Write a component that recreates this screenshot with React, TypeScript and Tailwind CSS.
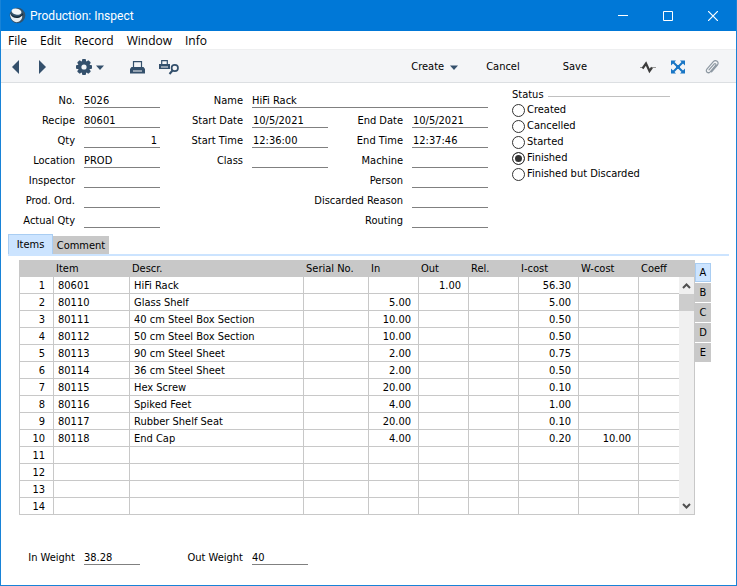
import React, { useState } from 'react'

type TypedRow = {
  item?: string
  descr?: string
  in?: string
  out?: string
  icost?: string
  wcost?: string
}

const rows: TypedRow[] = [
  { item: '80601', descr: 'HiFi Rack', out: '1.00', icost: '56.30' },
  { item: '80110', descr: 'Glass Shelf', in: '5.00', icost: '5.00' },
  { item: '80111', descr: '40 cm Steel Box Section', in: '10.00', icost: '0.50' },
  { item: '80112', descr: '50 cm Steel Box Section', in: '10.00', icost: '0.50' },
  { item: '80113', descr: '90 cm Steel Sheet', in: '2.00', icost: '0.75' },
  { item: '80114', descr: '36 cm Steel Sheet', in: '2.00', icost: '0.50' },
  { item: '80115', descr: 'Hex Screw', in: '20.00', icost: '0.10' },
  { item: '80116', descr: 'Spiked Feet', in: '4.00', icost: '1.00' },
  { item: '80117', descr: 'Rubber Shelf Seat', in: '20.00', icost: '0.10' },
  { item: '80118', descr: 'End Cap', in: '4.00', icost: '0.20', wcost: '10.00' },
  {},
  {},
  {},
  {},
]

const menus = ['File', 'Edit', 'Record', 'Window', 'Info']
const statuses = ['Created', 'Cancelled', 'Started', 'Finished', 'Finished but Discarded']
const flips = ['A', 'B', 'C', 'D', 'E']

const Logo = () => (
  <svg width="17" height="17" viewBox="0 0 17 17" aria-hidden="true">
    <circle cx="8.5" cy="8.5" r="7.8" fill="#33536c" />
    <ellipse cx="7.500" cy="4.600" rx="5" ry="3" fill="#f3f6f8" transform="rotate(12 7.500 4.600)" />
    <path d="M1.200 6C3 8.800 6 10 9.500 9.300c2-.5 3.500-1.600 4.300-3C15 8.500 13 11.500 9.500 12 5.500 12.500 1.200 10.500 1.200 6Z" fill="#152a3a" />
    <path d="M1 6.500C2.500 10 5.500 11.500 8.800 11c2-.4 3.500-1.500 4.500-2.800.2 3.300-1.800 6.300-4.800 6.900C4.500 15.500 1 12 1 6.500Z" fill="#e6ecf0" />
  </svg>
)

const Printer = () => (
  <svg width="15" height="13" viewBox="0 0 15 13" aria-hidden="true">
    <path d="M3.500 6V.7h8V6" fill="#f4f5f7" stroke="#34506c" strokeWidth="1.200" />
    <path d="M1.500 6h12L15 8v4.500H0V8Z" fill="#34506c" />
    <path d="M3 9.500h9v1H3Z" fill="#f4f5f7" />
  </svg>
)

const PrinterPreview = () => (
  <svg width="21" height="15" viewBox="0 0 21 15" aria-hidden="true">
    <path d="M2.700 4V.6h5.600V4" fill="#f4f5f7" stroke="#34506c" strokeWidth="1.200" />
    <path d="M0 4h11v5H0Z" fill="#34506c" />
    <path d="M2 6.500h7v1H2Z" fill="#f4f5f7" />
    <circle cx="15.800" cy="8" r="3.200" fill="#f4f5f7" stroke="#34506c" strokeWidth="1.700" />
    <path d="M13.500 10.500 10.500 14" stroke="#34506c" strokeWidth="2" />
  </svg>
)

const Gear = () => (
  <svg width="16" height="16" viewBox="0 0 16 16" aria-hidden="true">
    <g fill="#34506c">
      <rect x="6" y="0" width="4" height="16" rx="1" />
      <rect x="6" y="0" width="4" height="16" rx="1" transform="rotate(45 8 8)" />
      <rect x="6" y="0" width="4" height="16" rx="1" transform="rotate(90 8 8)" />
      <rect x="6" y="0" width="4" height="16" rx="1" transform="rotate(135 8 8)" />
      <circle cx="8" cy="8" r="6.200" />
    </g>
    <circle cx="8" cy="8" r="2.600" fill="#f4f5f7" />
  </svg>
)

const Caret = () => (
  <svg width="8" height="5" viewBox="0 0 8 5" aria-hidden="true">
    <path d="M0 .5h8L4 5Z" fill="#34506c" />
  </svg>
)

const Activity = () => (
  <svg width="16" height="13" viewBox="0 0 16 13" aria-hidden="true">
    <path d="M0 6.500h3.500M12 6.500h4" stroke="#999" strokeWidth="1" />
    <path d="M2.500 7.500 6 2.500 9.500 10l2.500-3.500" fill="none" stroke="#3c3c3c" strokeWidth="2.200" />
  </svg>
)

const Expand = () => (
  <svg width="14" height="14" viewBox="0 0 14 14" aria-hidden="true">
    <path d="M2 2l10 10M12 2 2 12" stroke="#1976c5" strokeWidth="2" />
    <path d="M0 .5h5L0 5.500ZM14 .5v5L9 .5ZM0 13.500v-5l5 5ZM14 13.500H9l5-5Z" fill="#1976c5" />
    <rect x="5" y="5" width="4" height="4" fill="#1976c5" />
  </svg>
)

const Clip = () => (
  <svg width="14" height="16" viewBox="0 0 14 16" aria-hidden="true">
    <path
      d="M4 10.800 9 5.200c1.200-1.300 2.700 0 1.600 1.300l-5.400 6.300c-2 2.200-5.200-.2-3.300-2.600L8.100 2.800c2.700-2.900 6.600.4 4.300 3.200L6.600 12.900"
      fill="none" stroke="#8e99a3" strokeWidth="1.200" strokeLinecap="round"
    />
  </svg>
)

type FieldProps = { label: string, value?: string, inputClass?: string, labelClass?: string }

const Field = ({ label, value = '', inputClass = '', labelClass = '' }: FieldProps) => {
  const id = label.toLowerCase().replace(/[^a-z]+/g, '-')
  return (
    <>
      <label htmlFor={id} className={`pt-[6px] pr-[9px] text-right leading-[14px] whitespace-nowrap ${labelClass}`}>{label}</label>
      <input id={id} defaultValue={value} className={`mt-1 h-4 min-w-0 border-b border-[#808080] pt-px leading-3 outline-none ${inputClass}`} />
    </>
  )
}

const num = 'border-r border-b border-[#c8c8c8] pt-[2px] pr-[7px] text-right'
const txt = 'border-r border-b border-[#c8c8c8] pt-[2px] pl-1'

const ItemsTable = () => (
  <div className="flex flex-1 border-x border-[#c8c8c8]">
    <table className="flex-1 table-fixed border-separate border-spacing-0 leading-[14px]">
      <colgroup>
        <col className="w-[34px]" />
        <col className="w-[76px]" />
        <col />
        <col className="w-[65px]" />
        <col className="w-[50px]" />
        <col className="w-[50px]" />
        <col className="w-[50px]" />
        <col className="w-[60px]" />
        <col className="w-[60px]" />
        <col className="w-10" />
      </colgroup>
      <thead>
        <tr className="h-[17px] bg-[#c8c8c8] text-left">
          <th aria-label="Row" className="p-0" />
          {['Item', 'Descr.', 'Serial No.', 'In', 'Out', 'Rel.', 'I-cost', 'W-cost', 'Coeff'].map((item) => (
            <th key={item} className="p-0 pl-[2px] font-normal whitespace-nowrap">{item}</th>
          ))}
        </tr>
      </thead>
      <tbody>
        {rows.map((row, i) => (
          <tr key={i} className="h-[17px]">
            <td className="border-r border-b border-[#c8c8c8] pt-[2px] pr-2 text-right">{i + 1}</td>
            <td className={txt}>{row.item}</td>
            <td className={txt}>{row.descr}</td>
            <td className={txt} />
            <td className={num}>{row.in}</td>
            <td className={num}>{row.out}</td>
            <td className={num} />
            <td className={num}>{row.icost}</td>
            <td className={num}>{row.wcost}</td>
            <td className="border-b border-[#c8c8c8]" />
          </tr>
        ))}
      </tbody>
    </table>
    <div className="flex w-[15px] flex-col border-b border-[#c8c8c8] bg-[#f0f0f0]">
      <div className="h-[17px] bg-[#c8c8c8]" />
      <button aria-label="Scroll up" className="flex h-[17px] items-center justify-center">
        <svg width="9" height="6" viewBox="0 0 9 6" aria-hidden="true">
          <path d="M1 5 4.500 1.500 8 5" fill="none" stroke="#505050" strokeWidth="2" />
        </svg>
      </button>
      <div className="h-[17px] bg-[#cdcdcd]" />
      <button aria-label="Scroll down" className="mt-auto flex h-[17px] items-center justify-center">
        <svg width="9" height="6" viewBox="0 0 9 6" aria-hidden="true">
          <path d="M1 1 4.500 4.500 8 1" fill="none" stroke="#505050" strokeWidth="2" />
        </svg>
      </button>
    </div>
  </div>
)

const App = () => {
  const [status, set_status] = useState<string>('Finished')
  const [flip, set_flip] = useState<string>('A')

  return (
    <div className="flex min-h-screen flex-col border border-t-0 border-[#1883d7] bg-white font-['DejaVu_Sans_Condensed','DejaVu_Sans',sans-serif] text-[11px] leading-4 text-black">
      <header className="flex h-[31px] items-center bg-[#0078d7] pl-2 font-['Roboto',sans-serif] text-xs text-white">
        <Logo />
        <h1 className="ml-1 flex-1">Production: Inspect</h1>
        <button aria-label="Minimize" className="flex h-full w-[45px] items-center justify-center">
          <svg width="10" height="10" viewBox="0 0 10 10" aria-hidden="true"><path d="M0 4.500h10" stroke="#fff" /></svg>
        </button>
        <button aria-label="Maximize" className="flex h-full w-[45px] items-center justify-center">
          <svg width="10" height="10" viewBox="0 0 10 10" aria-hidden="true"><path d="M.5.5h9v9h-9Z" fill="none" stroke="#fff" /></svg>
        </button>
        <button aria-label="Close" className="flex h-full w-[46px] items-center justify-center">
          <svg width="10" height="10" viewBox="0 0 10 10" aria-hidden="true"><path d="M0 0l10 10M10 0 0 10" stroke="#fff" strokeWidth="1.200" /></svg>
        </button>
      </header>

      <nav className="flex h-[18px] items-center gap-[13px] pt-[2px] pl-[7px] font-['Open_Sans',sans-serif] text-xs">
        {menus.map((item) => <button key={item}>{item}</button>)}
      </nav>

      <div className="flex h-[34px] items-center border-t border-b border-t-[#eeeff0] border-b-[#dcdfe2] bg-[#f4f5f7] pt-[2px] pr-[17px] pl-[11px]">
        <button aria-label="Previous">
          <svg width="7" height="14" viewBox="0 0 7 14" aria-hidden="true"><path d="M7 0v14L0 7Z" fill="#34506c" /></svg>
        </button>
        <button aria-label="Next" className="ml-5">
          <svg width="7" height="14" viewBox="0 0 7 14" aria-hidden="true"><path d="M0 0v14l7-7Z" fill="#34506c" /></svg>
        </button>
        <button aria-label="Options" className="ml-[30px] flex items-center gap-1"><Gear /><Caret /></button>
        <button aria-label="Print" className="ml-[26px]"><Printer /></button>
        <button aria-label="Preview" className="ml-[14px]"><PrinterPreview /></button>
        <div className="ml-auto flex items-center">
          <button className="flex items-center gap-[6px]">Create <Caret /></button>
          <button className="ml-7">Cancel</button>
          <button className="ml-[43px]">Save</button>
          <button aria-label="Activity" className="ml-[53px]"><Activity /></button>
          <button aria-label="Expand" className="ml-[15px]"><Expand /></button>
          <button aria-label="Attachments" className="ml-5"><Clip /></button>
        </div>
      </div>

      <main className="flex flex-1 flex-col pt-[5px]">
        <div className="flex items-start gap-6">
          <div className="grid auto-rows-[20px] grid-cols-[83px_76px_92px_76px_84px_76px]">
            <Field label="No." value="5026" />
            <Field label="Name" value="HiFi Rack" inputClass="col-span-3" />
            <Field label="Recipe" value="80601" />
            <Field label="Start Date" value="10/5/2021" inputClass="pl-px" />
            <Field label="End Date" value="10/5/2021" inputClass="pl-px" />
            <Field label="Qty" value="1" inputClass="pr-[3px] text-right" />
            <Field label="Start Time" value="12:36:00" inputClass="pl-px" />
            <Field label="End Time" value="12:37:46" inputClass="pl-px" />
            <Field label="Location" value="PROD" />
            <Field label="Class" />
            <Field label="Machine" />
            <Field label="Inspector" />
            <Field label="Person" labelClass="col-start-5" />
            <Field label="Prod. Ord." />
            <Field label="Discarded Reason" labelClass="col-span-3" />
            <Field label="Actual Qty" />
            <Field label="Routing" labelClass="col-start-5" />
          </div>

          <fieldset className="w-[158px]">
            <div className="-mt-px flex h-[15px] items-center gap-1">
              <span>Status</span>
              <span className="mt-1 h-px flex-1 bg-[#c0c0c0]" />
            </div>
            {statuses.map((item) => (
              <label key={item} className="flex h-4 items-center gap-[2px] whitespace-nowrap">
                <input
                  type="radio"
                  name="status"
                  checked={status === item}
                  onChange={() => set_status(item)}
                  className="size-[13px] appearance-none rounded-full border border-[#333] bg-white checked:bg-[#333] checked:shadow-[inset_0_0_0_2px_#fff]"
                />
                {item}
              </label>
            ))}
          </fieldset>
        </div>

        <div className="mx-[7px] mt-[6px] flex items-end border-b-2 border-[#cce4ff]">
          <button className="h-5 w-[45px] border border-b-0 border-[#a9cdf2] bg-[#cce4ff]">Items</button>
          <button className="h-[18px] w-14 bg-[#c8c8c8] pt-[2px]">Comment</button>
        </div>

        <div className="mt-1 mr-[25px] ml-[18px] flex">
          <ItemsTable />
          <div className="flex flex-col gap-px pt-[3px]">
            {flips.map((item) => (
              <button
                key={item}
                onClick={() => set_flip(item)}
                className={`h-[19px] w-4 ${flip === item ? 'border border-[#a9cdf2] bg-[#cce4ff]' : 'bg-[#c8c8c8]'}`}
              >
                {item}
              </button>
            ))}
          </div>
        </div>

        <div className="mt-[30px] grid auto-rows-[20px] grid-cols-[83px_56px_112px_56px]">
          <Field label="In Weight" value="38.28" />
          <Field label="Out Weight" value="40" />
        </div>
      </main>
    </div>
  )
}

export default App
